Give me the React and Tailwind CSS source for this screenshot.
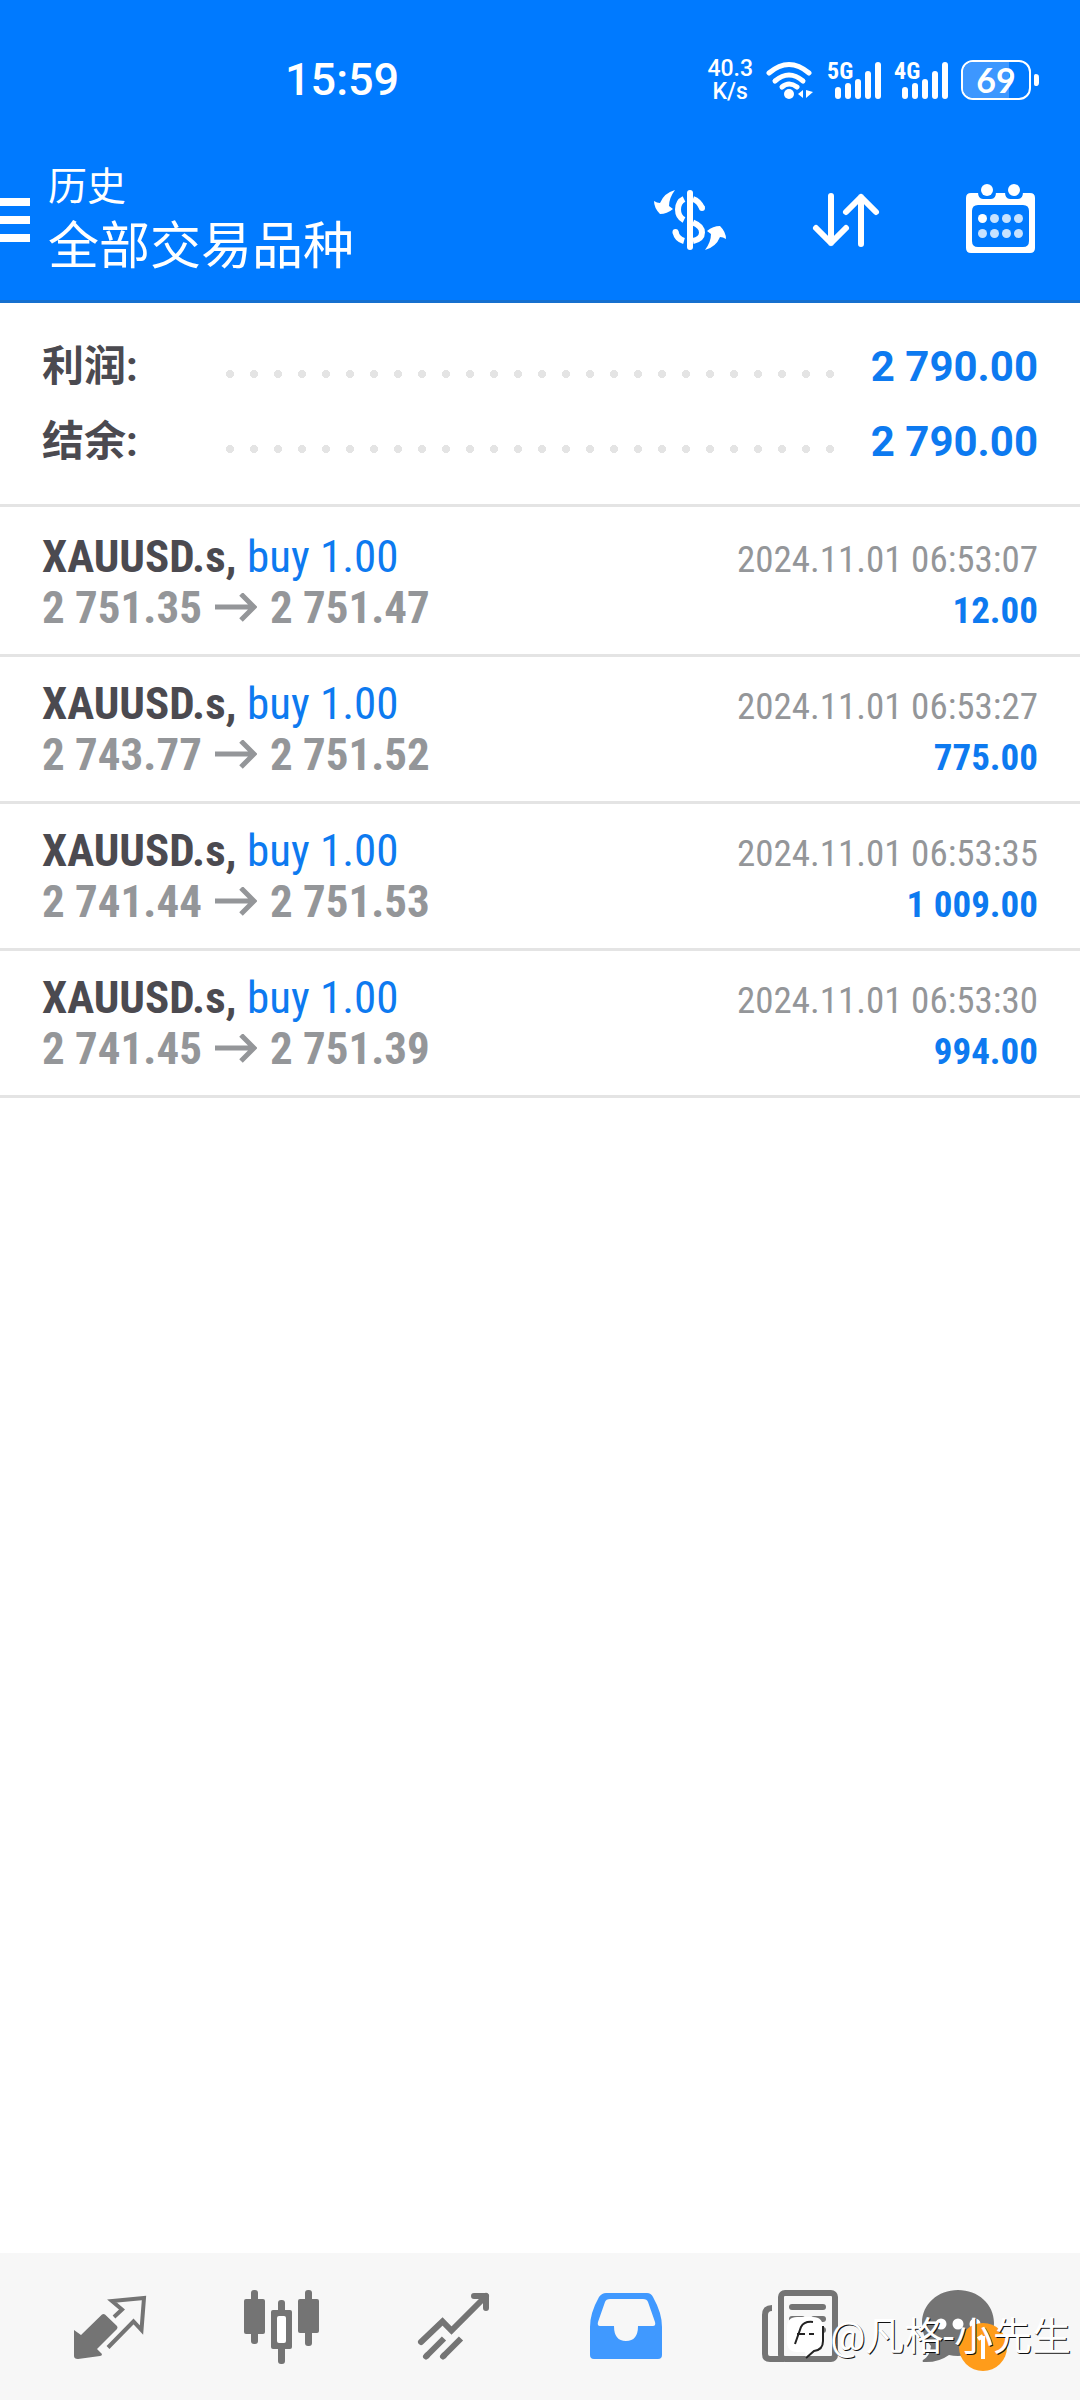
const deals = [
  {
    id: 1,
    symbol: "XAUUSD.s",
    side: "buy 1.00",
    open: "2 751.35",
    close: "2 751.47",
    time: "2024.11.01 06:53:07",
    profit: "12.00",
  },
  {
    id: 2,
    symbol: "XAUUSD.s",
    side: "buy 1.00",
    open: "2 743.77",
    close: "2 751.52",
    time: "2024.11.01 06:53:27",
    profit: "775.00",
  },
  {
    id: 3,
    symbol: "XAUUSD.s",
    side: "buy 1.00",
    open: "2 741.44",
    close: "2 751.53",
    time: "2024.11.01 06:53:35",
    profit: "1 009.00",
  },
  {
    id: 4,
    symbol: "XAUUSD.s",
    side: "buy 1.00",
    open: "2 741.45",
    close: "2 751.39",
    time: "2024.11.01 06:53:30",
    profit: "994.00",
  },
];

const WifiIcon = () => (
  <svg width="48" height="38" viewBox="0 0 48 38" fill="none">
    <g stroke="#fff" strokeWidth="5" strokeLinecap="round">
      <path d="M3 12Q23 -5 43 12" />
      <path d="M9 20Q23 8 37 20" />
      <path d="M16 26Q23 20 31 26" />
    </g>
    <circle cx="23" cy="33" r="5" fill="#fff" />
    <path d="M37 29v8l-5-4zM40 29v8l7-6z" fill="#fff" />
  </svg>
);

const SignalIcon = ({ label }) => (
  <div className="relative h-[38px] w-[54px]">
    <span className="absolute top-0 left-0 font-['Roboto_Condensed','Roboto'] text-[24px] leading-[20px] font-bold">
      {label}
    </span>
    <svg width="54" height="38" viewBox="0 0 54 38" fill="#fff">
      <rect x="8" y="26" width="6" height="12" rx="3" />
      <rect x="18" y="22" width="6" height="16" rx="3" />
      <rect x="28" y="18" width="6" height="20" rx="3" />
      <rect x="38" y="10" width="6" height="28" rx="3" />
      <rect x="48" y="1" width="6" height="37" rx="3" />
    </svg>
  </div>
);

const Battery = ({ level }) => (
  <div className="flex items-center gap-[3px]">
    <div className="relative flex h-[40px] w-[70px] items-center justify-center overflow-hidden rounded-[12px] border-2 border-white">
      <div
        className="absolute inset-y-0 left-0 bg-[#3d97ff]"
        style={{ width: `${level}%` }}
      />
      <span className="relative font-['Lato'] text-[34px] leading-[36px] font-bold">
        {level}
      </span>
    </div>
    <div className="h-[12px] w-[5px] rounded-r-[4px] rounded-l-[2px] bg-white" />
  </div>
);

const StatusBar = () => (
  <div className="flex h-[135px] items-center justify-between pt-[25px] pr-[41px] pl-[285px]">
    <span className="text-[45px] leading-[48px] font-medium">15:59</span>
    <div className="flex items-center gap-[13px]">
      <div className="flex flex-col items-center text-[23px] leading-[23px] font-medium">
        <span>40.3</span>
        <span>K/s</span>
      </div>
      <WifiIcon />
      <SignalIcon label="5G" />
      <SignalIcon label="4G" />
      <Battery level={69} />
    </div>
  </div>
);

const SwapIcon = () => (
  <svg width="72" height="72" viewBox="0 0 72 72" fill="none">
    <rect x="33" y="6" width="6" height="60" rx="3" fill="#fff" />
    <g stroke="#fff" strokeWidth="6">
      <path d="M30 15Q24 18 24 25.500T30 36" />
      <path d="M39 15Q45 17 48 24" />
      <path d="M39 38.500Q48 42 48 48.500T39 57" />
      <path d="M21.500 48Q23 55 30 57" />
    </g>
    <circle cx="48" cy="24" r="3" fill="#fff" />
    <circle cx="21.500" cy="48" r="3" fill="#fff" />
    <g fill="#fff">
      <path d="M21 6Q10 9 6 19Q3 19 0 17Q0 24 6 30Q13 30 19 25L15 22Q15 14 21 6Z" />
      <path d="M51 66Q62 63 66 53Q69 53 72 55Q72 48 66 42Q59 42 53 47L57 50Q57 58 51 66Z" />
    </g>
  </svg>
);

const SortIcon = () => (
  <svg
    width="72"
    height="72"
    viewBox="0 0 72 72"
    fill="none"
    stroke="#fff"
    strokeWidth="6"
    strokeLinecap="round"
    strokeLinejoin="round"
  >
    <path d="M21 12V59M6 44L21 59L36 44" />
    <path d="M51 60V13M36 28L51 13L66 28" />
  </svg>
);

const CalendarIcon = () => (
  <svg width="72" height="72" viewBox="0 0 72 72">
    <path
      fillRule="evenodd"
      fill="#fff"
      d="M5 9H64Q69 9 69 14V64Q69 69 64 69H5Q0 69 0 64V14Q0 9 5 9ZM12 21Q6 21 6 27V57Q6 63 12 63H57Q63 63 63 57V27Q63 21 57 21Z"
    />
    <path
      d="M12 8Q12 15 17 15H25Q30 15 30 8ZM39 8Q39 15 44 15H52Q57 15 57 8Z"
      fill="#007aff"
    />
    <circle cx="21" cy="6" r="6" fill="#fff" />
    <circle cx="48" cy="6" r="6" fill="#fff" />
    <circle cx="16.500" cy="34.500" r="4.500" fill="#fff" />
    <g fill="#c7e2ff">
      <circle cx="28.500" cy="34.500" r="4.500" />
      <circle cx="40.500" cy="34.500" r="4.500" />
      <circle cx="52.500" cy="34.500" r="4.500" />
      <circle cx="16.500" cy="49.500" r="4.500" />
      <circle cx="28.500" cy="49.500" r="4.500" />
      <circle cx="40.500" cy="49.500" r="4.500" />
      <circle cx="52.500" cy="49.500" r="4.500" />
    </g>
  </svg>
);

const Header = () => (
  <header className="border-b-[3px] border-[#1570cf] bg-[#007aff] text-white">
    <StatusBar />
    <div className="flex h-[165px] items-center pt-1 pr-[42px]">
      <button aria-label="菜单" className="flex w-[30px] flex-col gap-[10px]">
        <span className="h-2 bg-white" />
        <span className="h-2 bg-white" />
        <span className="h-2 bg-white" />
      </button>
      <div className="grow pl-[18px]">
        <p className="text-[39px] leading-[54px]">历史</p>
        <h1 className="text-[51px] leading-[66px]">全部交易品种</h1>
      </div>
      <div className="flex gap-[84px]">
        <button aria-label="兑换">
          <SwapIcon />
        </button>
        <button aria-label="排序">
          <SortIcon />
        </button>
        <button aria-label="日期">
          <CalendarIcon />
        </button>
      </div>
    </div>
  </header>
);

const SummaryRow = ({ label, value }) => (
  <div className="flex h-[75px] items-center text-[42px] leading-[60px] font-bold">
    <dt className="w-[176px] text-[#4b4a50]">{label}:</dt>
    <div className="mt-[14px] h-6 grow bg-[radial-gradient(circle,#e4e4e4_4px,transparent_4px)] bg-[length:24px_24px]" />
    <dd className="pl-[29px] text-[#0d7af0]">{value}</dd>
  </div>
);

const DealRow = ({ deal }) => (
  <li className="border-b-[3px] border-[#e4e4e4] px-[42px] py-[21px] font-['Roboto_Condensed','Liberation_Sans_Narrow',sans-serif] leading-[51px]">
    <div className="flex h-[51px] items-baseline justify-between">
      <p className="text-[45px] text-[#0d7af0]">
        <span className="font-bold text-[#4b4a50]">{deal.symbol},</span>{" "}
        {deal.side}
      </p>
      <time className="text-[37px] text-[#949699]">{deal.time}</time>
    </div>
    <div className="flex h-[51px] items-baseline justify-between font-bold">
      <p className="flex items-center gap-[13px] text-[45px] text-[#949699]">
        {deal.open}
        <svg
          width="42"
          height="30"
          viewBox="0 0 42 30"
          fill="none"
          stroke="currentColor"
          strokeWidth="5"
        >
          <path d="M0 14H38M26 1L39 14L26 27" />
        </svg>
        {deal.close}
      </p>
      <p className="text-[37px] text-[#0d7af0]">{deal.profit}</p>
    </div>
  </li>
);

const QuotesIcon = () => (
  <svg width="96" height="96" viewBox="0 0 96 96">
    <path
      d="M12 51L19 56L40 35.500Q41.500 34.500 43 35.500L55 47Q56 48.500 55 50L35 70L40 75Q40 77 38 77L16 80Q12 80 12 77Z"
      fill="#747474"
    />
    <path
      d="M52 38L60 30.500L50 22L82 19L79.500 51L71.500 42.500L46 68.500"
      fill="none"
      stroke="#747474"
      strokeWidth="4"
    />
  </svg>
);

const ChartIcon = () => (
  <svg width="96" height="96" viewBox="0 0 96 96" fill="#747474">
    <rect x="10" y="20" width="21" height="35" rx="2" />
    <rect x="17" y="11" width="7" height="54" rx="3" />
    <rect x="64" y="20" width="21" height="34" rx="2" />
    <rect x="71" y="11" width="7" height="56" rx="3" />
    <rect x="44" y="21" width="7" height="64" rx="3" />
    <rect x="37" y="31" width="21" height="39" rx="2" />
    <rect x="43" y="37" width="9" height="27" rx="2" fill="#fff" />
  </svg>
);

const TradeIcon = () => (
  <svg
    width="96"
    height="96"
    viewBox="0 0 96 96"
    fill="none"
    stroke="#747474"
    strokeWidth="6"
  >
    <g strokeLinecap="round">
      <path d="M15 63L36.500 42.500L45.500 51.500L80 17" />
      <path d="M68 17H80V29" strokeLinejoin="round" />
      <path d="M20 77.500l1-1M37 77.500l1-1" />
    </g>
    <path d="M20 77.500L38 59.500M37 77.500L55 59.500" />
  </svg>
);

const HistoryIcon = () => (
  <svg width="96" height="96" viewBox="0 0 96 96" fill="#4099ff">
    <path
      fillRule="evenodd"
      d="M28 14H69Q73 14 75 18Q84 34 84 48V76Q84 80 80 80H16Q12 80 12 76V48Q12 34 21 18Q24 14 28 14ZM32 20Q28 20 27 23L20 43Q19 47 22 47H36Q36 62 48 62T60 47H75Q78 47 77 43L70 23Q69 20 65 20Z"
    />
  </svg>
);

const NewsIcon = () => (
  <svg width="96" height="96" viewBox="0 0 96 96" fill="none">
    <rect
      x="31"
      y="14"
      width="54"
      height="66"
      rx="4"
      stroke="#747474"
      strokeWidth="6"
    />
    <path
      d="M22 29Q15 29 15 36V75Q15 80 20 80H34"
      stroke="#747474"
      strokeWidth="6"
    />
    <g fill="#747474">
      <rect x="39" y="25" width="37" height="6" rx="3" />
      <rect x="39" y="37" width="16" height="22" rx="3" />
      <rect x="61" y="37" width="15" height="6" rx="3" />
      <rect x="61" y="48" width="15" height="6" rx="3" />
    </g>
  </svg>
);

const MessagesIcon = () => (
  <svg width="96" height="96" viewBox="0 0 96 96">
    <path
      d="M36 11C56 11 72 25 72 44S56 77 36 77Q31 77 27 76Q16 84 1 83Q0 82 1 81Q8 77 9 67Q0 58 0 44C0 25 16 11 36 11Z"
      fill="#747474"
    />
    <g fill="#fff">
      <circle cx="19" cy="45" r="5.500" />
      <circle cx="36" cy="45" r="5.500" />
      <circle cx="53" cy="45" r="5.500" />
    </g>
    <circle cx="61" cy="68" r="24" fill="#ff9c1a" />
    <path
      d="M61 80V57M56 60L61 57"
      fill="none"
      stroke="#fff"
      strokeWidth="4"
    />
  </svg>
);

const tabs = [
  { name: "行情", Icon: QuotesIcon },
  { name: "图表", Icon: ChartIcon },
  { name: "交易", Icon: TradeIcon },
  { name: "历史", Icon: HistoryIcon },
  { name: "新闻", Icon: NewsIcon },
  { name: "消息", Icon: MessagesIcon },
];

const Watermark = () => (
  <div className="pointer-events-none absolute right-[9px] bottom-[36px] flex items-center gap-[5px] text-[39px] leading-[54px] text-white [text-shadow:1px_1px_0_#111]">
    <svg width="38" height="46" viewBox="0 0 38 46">
      <path
        d="M10 3H26Q36 3 36 14V27Q36 36 27 37L19 44L18 38H10Q0 38 0 27V14Q0 3 10 3Z"
        fill="#fff"
      />
      <path
        d="M8 30L14 13Q17 7 26 8M10 20H18M22 20H27M36 12V27Q36 36 27 37L19 44"
        fill="none"
        stroke="#222"
        strokeWidth="2"
      />
    </svg>
    @凡格-小先生
  </div>
);

const App = () => {
  return (
    <div className="flex min-h-screen flex-col bg-white font-['Roboto','Noto_Sans_CJK_SC',sans-serif]">
      <Header />
      <main className="grow">
        <dl className="border-b-[3px] border-[#e4e4e4] px-[42px] pt-[26px] pb-[25px]">
          <SummaryRow label="利润" value="2 790.00" />
          <SummaryRow label="结余" value="2 790.00" />
        </dl>
        <ul className="pt-[3px]">
          {deals.map((deal) => (
            <DealRow key={deal.id} deal={deal} />
          ))}
        </ul>
      </main>
      <nav className="relative flex h-[147px] items-center bg-[#f7f7f7] px-6">
        {tabs.map(({ name, Icon }) => (
          <button
            key={name}
            aria-label={name}
            className="flex flex-1 justify-center"
          >
            <Icon />
          </button>
        ))}
        <Watermark />
      </nav>
    </div>
  );
};

export default App;
